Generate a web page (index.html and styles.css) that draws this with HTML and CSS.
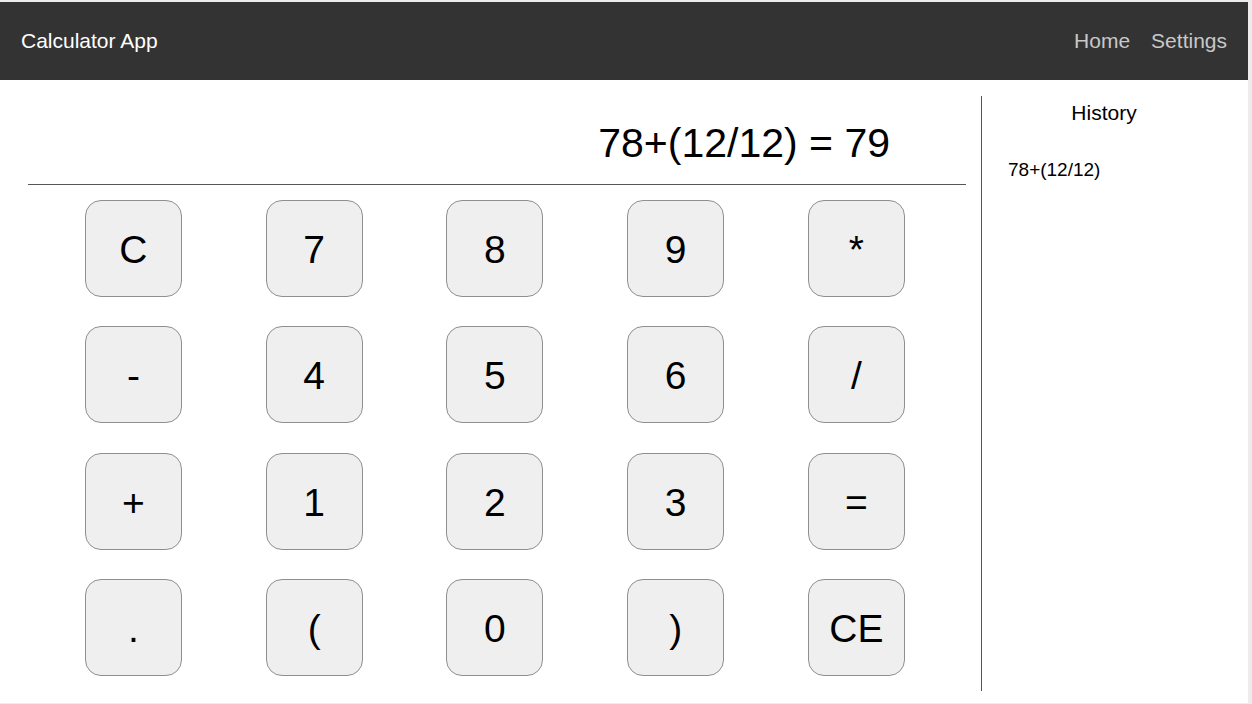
FILE: index.html
```html
<!DOCTYPE html>
<html lang="en">
<head>
<meta charset="utf-8">
<title>Calculator App</title>
<link rel="stylesheet" href="styles.css">
</head>
<body>
<div class="app">
  <header class="topbar">
    <div class="brand">Calculator App</div>
    <nav class="nav">
      <a class="nav-link" href="#">Home</a>
      <a class="nav-link" href="#">Settings</a>
    </nav>
  </header>
  <main class="main">
    <section class="calc">
      <div class="display">78+(12/12) = 79</div>
      <div class="keys">
        <button class="key">C</button>
        <button class="key">7</button>
        <button class="key">8</button>
        <button class="key">9</button>
        <button class="key">*</button>
        <button class="key">-</button>
        <button class="key">4</button>
        <button class="key">5</button>
        <button class="key">6</button>
        <button class="key">/</button>
        <button class="key">+</button>
        <button class="key">1</button>
        <button class="key">2</button>
        <button class="key">3</button>
        <button class="key">=</button>
        <button class="key">.</button>
        <button class="key">(</button>
        <button class="key">0</button>
        <button class="key">)</button>
        <button class="key">CE</button>
      </div>
    </section>
    <aside class="history">
      <div class="history-title">History</div>
      <div class="history-item">78+(12/12)</div>
    </aside>
  </main>
</div>
</body>
</html>
```
FILE: styles.css
```css
html, body {
  margin: 0;
  padding: 0;
}
body {
  background: #ececec;
  font-family: "Liberation Sans", Arial, Helvetica, sans-serif;
  color: #000;
}
.app {
  width: 1248px;
  height: 701px;
  margin-top: 2px;
  background: #fff;
  display: flex;
  flex-direction: column;
}
.topbar {
  height: 78px;
  flex: none;
  background: #333333;
  display: flex;
  align-items: center;
  justify-content: space-between;
  padding: 0 21px;
  box-sizing: border-box;
}
.brand {
  color: #ffffff;
  font-size: 21px;
}
.nav {
  display: flex;
  gap: 21px;
}
.nav-link {
  color: #c8c8c8;
  font-size: 21px;
  text-decoration: none;
}
.main {
  flex: 1;
  display: flex;
}
.calc {
  width: 981px;
  flex: none;
  box-sizing: border-box;
  padding: 0 15px 0 28px;
}
.display {
  height: 105px;
  box-sizing: border-box;
  padding: 40px 76px 0 0;
  text-align: right;
  font-size: 41px;
  line-height: 47px;
  border-bottom: 1px solid #555;
}
.keys {
  margin: 15px 0 0 15px;
  width: 905px;
  display: grid;
  grid-template-columns: repeat(5, 180.75px);
  grid-auto-rows: 97px;
  row-gap: 29.3px;
}
.key {
  justify-self: center;
  width: 97px;
  height: 97px;
  background: #efefef;
  border: 1px solid #8f8f8f;
  border-radius: 16px;
  font-family: "Liberation Sans", Arial, Helvetica, sans-serif;
  font-size: 39px;
  color: #000;
  padding: 3px 0 0 0;
}
.history {
  flex: 1;
  margin: 16px 0 12px 0;
  border-left: 1px solid #555;
  padding: 5px 22px 0 0;
}
.history-title {
  text-align: center;
  font-size: 21px;
  line-height: 24px;
}
.history-item {
  margin-top: 34px;
  padding-left: 26px;
  font-size: 19px;
  line-height: 22px;
}
```
